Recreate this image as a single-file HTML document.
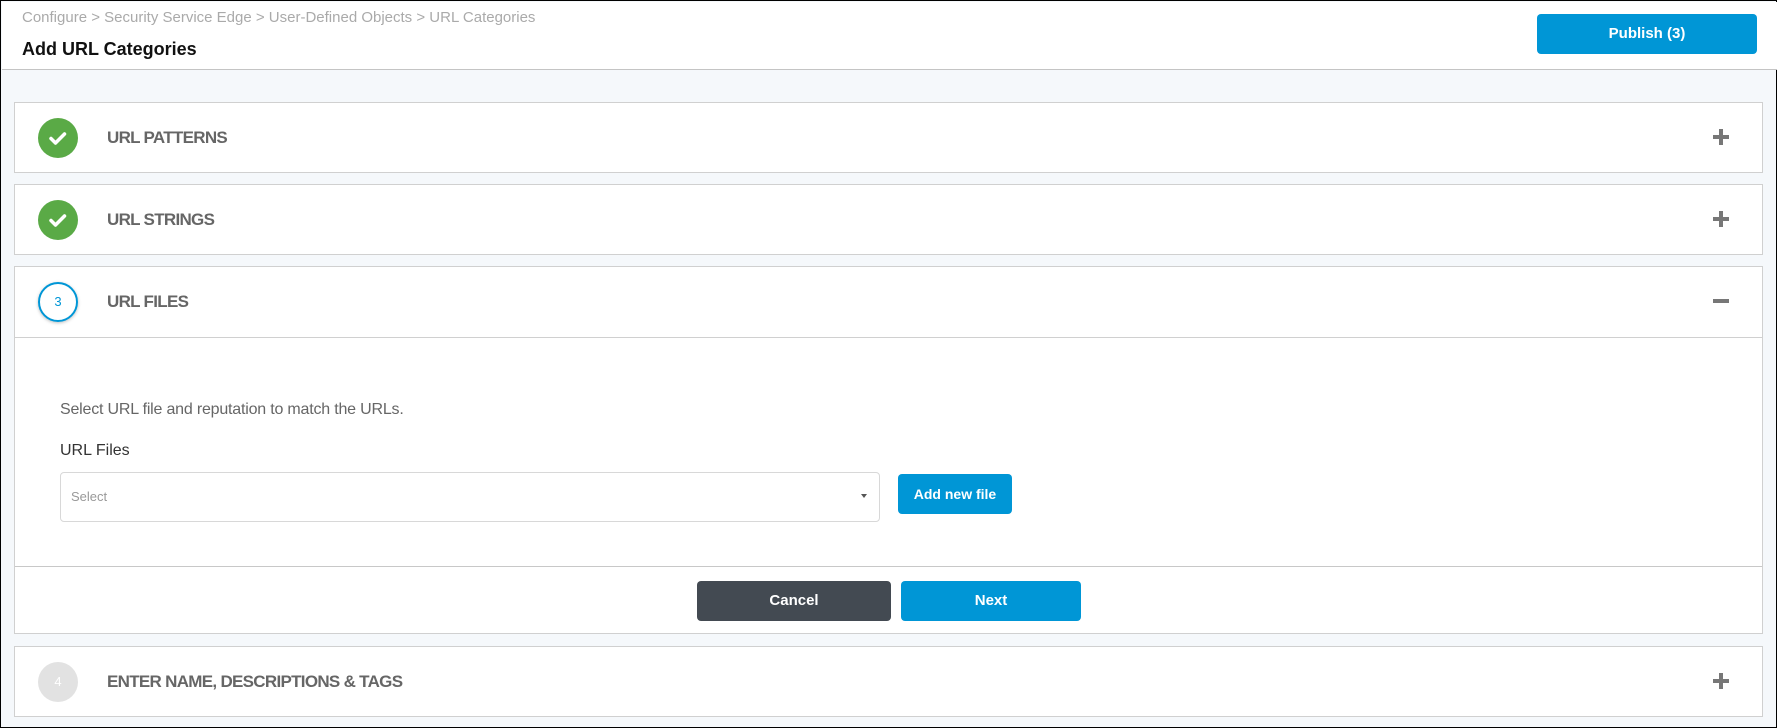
<!DOCTYPE html>
<html><head><meta charset="utf-8"><style>
*{box-sizing:border-box;margin:0;padding:0}
body{width:1777px;height:728px;overflow:hidden;font-family:"Liberation Sans",sans-serif;background:#fff}
.frame{position:absolute;left:0;top:0;width:1777px;height:728px;border:1px solid #000;background:#f5f8fb}
.hdr{position:absolute;left:1px;top:1px;width:1775px;height:68px;background:#fff;border-bottom:1px solid #c4c4c4}
.bc{position:absolute;left:20px;top:7px;font-size:15px;color:#aaa}
.title{position:absolute;left:20px;top:37px;font-size:18px;font-weight:bold;color:#111}
.pub{position:absolute;left:1535px;top:12px;width:220px;height:40px;background:#0096d6;border-radius:4px;color:#fff;font-weight:bold;font-size:15px;text-align:center;line-height:40px}
.panel{position:absolute;left:13px;width:1749px;background:#fff;border:1px solid #d0d0d0}
.ph{position:absolute;left:0;top:0;width:100%;height:70px}
.circ{position:absolute;left:23px;top:15px;width:40px;height:40px;border-radius:50%}
.green{background:#5aaa46}
.lbl{position:absolute;left:92px;top:25px;font-size:17px;font-weight:bold;color:#666;letter-spacing:-0.7px}
.pm{position:absolute;left:1696px;top:24px;width:20px;height:20px}
.pm:before{content:"";position:absolute;left:2px;top:8px;width:16px;height:4px;background:#777}
.plus:after{content:"";position:absolute;left:8px;top:2px;width:4px;height:16px;background:#777}
.btn{position:absolute;border-radius:4px;color:#fff;font-weight:bold;font-size:15px;text-align:center}
</style></head><body>
<div class="frame">
<div class="hdr">
<div class="bc">Configure &gt; Security Service Edge &gt; User-Defined Objects &gt; URL Categories</div>
<div class="title">Add URL Categories</div>
<div class="pub">Publish (3)</div>
</div>

<div class="panel" style="top:101px;height:71px">
<div class="ph"><div class="circ green"><svg width="40" height="40"><path d="M13 20.5l4.5 4.5 9-9" stroke="#fff" stroke-width="3.5" fill="none" stroke-linecap="round" stroke-linejoin="round"/></svg></div>
<div class="lbl">URL PATTERNS</div><div class="pm plus"></div></div>
</div>

<div class="panel" style="top:183px;height:71px">
<div class="ph"><div class="circ green"><svg width="40" height="40"><path d="M13 20.5l4.5 4.5 9-9" stroke="#fff" stroke-width="3.5" fill="none" stroke-linecap="round" stroke-linejoin="round"/></svg></div>
<div class="lbl">URL STRINGS</div><div class="pm plus"></div></div>
</div>

<div class="panel" style="top:265px;height:368px">
<div class="ph" style="border-bottom:1px solid #d0d0d0;height:71px"><div class="circ" style="border:2px solid #0096d6;box-shadow:0 1px 3px rgba(0,0,0,.25);text-align:center;line-height:36px;font-size:13px;color:#0096d6">3</div>
<div class="lbl">URL FILES</div><div class="pm"></div></div>
<div style="position:absolute;left:45px;top:134px;font-size:16px;color:#666;letter-spacing:-0.2px">Select URL file and reputation to match the URLs.</div>
<div style="position:absolute;left:45px;top:175px;font-size:16px;color:#333">URL Files</div>
<div style="position:absolute;left:45px;top:205px;width:820px;height:50px;border:1px solid #d8d8d8;border-radius:4px">
<span style="position:absolute;left:10px;top:16px;font-size:13px;color:#999">Select</span>
<span style="position:absolute;right:12px;top:21px;width:0;height:0;border-left:3px solid transparent;border-right:3px solid transparent;border-top:4px solid #555"></span></div>
<div class="btn" style="left:883px;top:207px;width:114px;height:40px;line-height:40px;background:#0096d6;font-size:14px">Add new file</div>
<div style="position:absolute;left:0;top:299px;width:100%;border-top:1px solid #c8c8c8"></div>
<div class="btn" style="left:682px;top:314px;width:194px;height:40px;line-height:40px;background:#434a52">Cancel</div>
<div class="btn" style="left:886px;top:314px;width:180px;height:40px;line-height:40px;background:#0096d6">Next</div>
</div>

<div class="panel" style="top:645px;height:71px">
<div class="ph"><div class="circ" style="background:#e2e2e2;text-align:center;line-height:40px;font-size:13px;color:#fff">4</div>
<div class="lbl">ENTER NAME, DESCRIPTIONS &amp; TAGS</div><div class="pm plus"></div></div>
</div>
</div>
</body></html>
